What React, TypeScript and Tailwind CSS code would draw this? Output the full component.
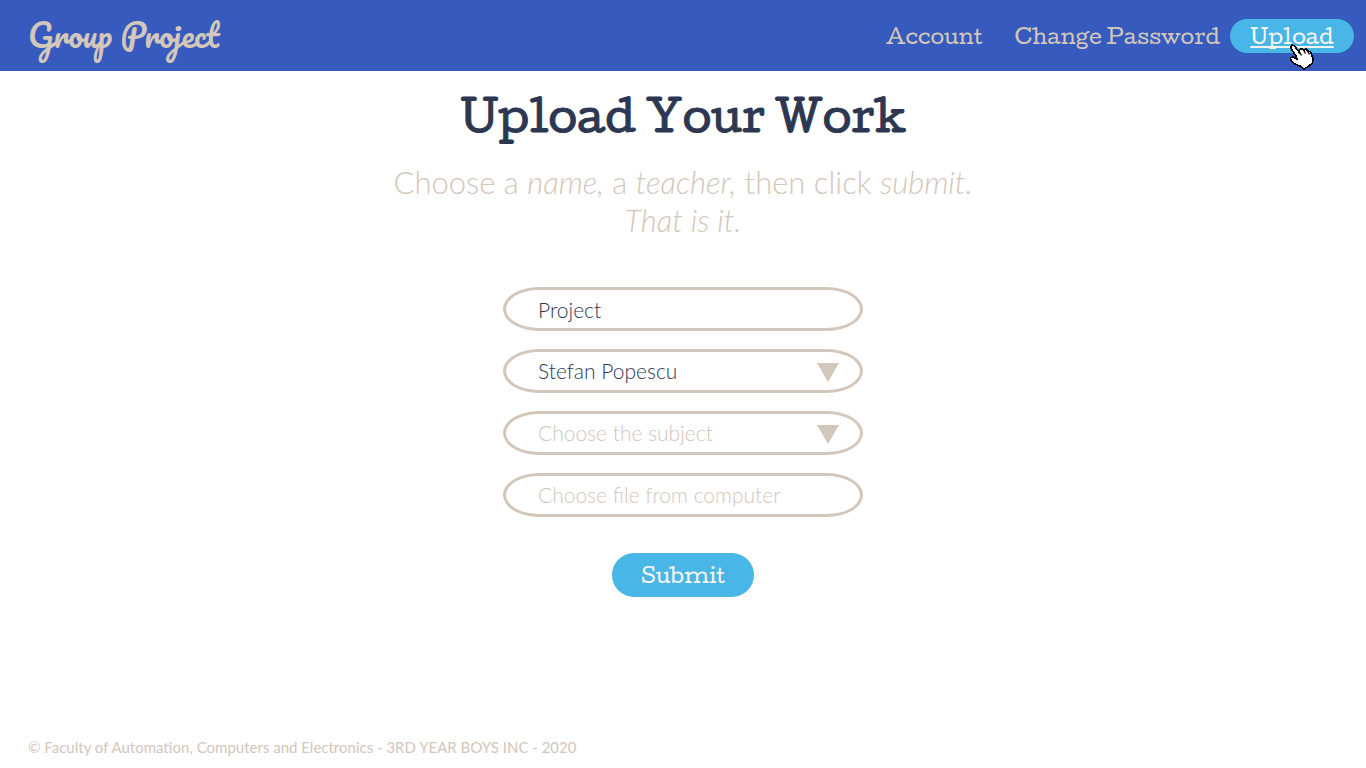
import { useState } from "react";

const slab = "font-['Cutive','Podkova','DejaVu_Serif',serif] font-normal";
const fieldBox =
  "h-[44px] w-full rounded-[36px/22px] border-[3px] border-[#d3c6ba] bg-white pl-8 text-[21px] leading-[28px] font-light outline-none";

function HandCursor() {
  return (
    <svg
      viewBox="0 0 26 26"
      className="pointer-events-none absolute top-[25px] left-[59px] h-[26px] w-[26px]"
      aria-hidden="true"
    >
      <path
        d="M1.500 3L3 1L5.500 2L10 8L10.500 5.500L13 4.500L15 6L17 5L19 7L21.500 8L24 14L23.500 19L20 22L15 25L12 22.500L6 20L2 16.500L1.500 14L4 13L8 15L7 12L3 6Z"
        fill="#ffffff"
        stroke="#000000"
        strokeWidth="1.600"
        shapeRendering="crispEdges"
      />
      <path d="M10.500 8L12.500 11.500M14.500 6L16.500 9.500M18.500 7L20.500 10.500" stroke="#000000" strokeWidth="1.300" fill="none" />
    </svg>
  );
}

function Triangle() {
  return (
    <svg
      viewBox="0 0 22 19"
      className="pointer-events-none absolute top-[14px] right-6 h-[19px] w-[22px]"
      aria-hidden="true"
    >
      <path d="M0 0H22L11 19Z" fill="#d3c6ba" />
    </svg>
  );
}

function SelectField({ id, label, options, initial }: { id: string; label: string; options: string[]; initial: string }) {
  const [value, setValue] = useState(initial);
  return (
    <div className="relative">
      <label htmlFor={id} className="sr-only">{label}</label>
      <select
        id={id}
        value={value}
        onChange={(e) => setValue(e.target.value)}
        className={`${fieldBox} block appearance-none pr-14 ${value ? "text-[#2d3751]" : "text-[#d3c6ba]"}`}
      >
        <option value="">{label}</option>
        {options.map((o) => (
          <option key={o} value={o}>{o}</option>
        ))}
      </select>
      <Triangle />
    </div>
  );
}

export default function App() {
  const [fileName, setFileName] = useState("");
  return (
    <div className="flex min-h-screen flex-col bg-white font-['Lato',sans-serif] text-[#d3c6ba]">
      <header className="flex h-[71px] items-center justify-between bg-[#365abd] pr-3 pl-7">
        <a href="#home" className="pb-1 font-['Pacifico','Lato',cursive] text-[32px] leading-[56px]">Group Project</a>
        <nav className={`flex items-center text-[20px] leading-[34px] ${slab}`}>
          <a href="#account">Account</a>
          <a href="#password" className="ml-8">Change Password</a>
          <a
            href="#upload"
            className="relative ml-2.5 flex h-[34px] w-[124px] items-center justify-center rounded-full bg-[#48b6e7] text-[#f7f5f2] underline decoration-2 underline-offset-2 [text-decoration-skip-ink:none]"
          >
            Upload
            <HandCursor />
          </a>
        </nav>
      </header>

      <main className="flex flex-1 flex-col items-center">
        <h1 className={`mt-4 text-[42px] leading-[56px] text-[#2d3751] [-webkit-text-stroke:1px_#2d3751] ${slab}`}>
          Upload Your Work
        </h1>
        <p className="mt-5 text-center text-[31px] leading-[38px] font-light">
          Choose a <em>name,</em> a <em>teacher,</em> then click <em>submit.</em>
          <br />
          <em>That is it.</em>
        </p>
        <form className="mt-12 flex w-[360px] flex-col items-center" onSubmit={(e) => e.preventDefault()}>
          <div className="flex w-full flex-col gap-[18px]">
            <div>
              <label htmlFor="name" className="sr-only">Project name</label>
              <input id="name" type="text" defaultValue="Project" className={`${fieldBox} block pr-8 text-[#2d3751]`} />
            </div>
            <SelectField id="teacher" label="Choose the teacher" options={["Stefan Popescu"]} initial="Stefan Popescu" />
            <SelectField id="subject" label="Choose the subject" options={["Software Engineering", "Databases"]} initial="" />
            <label htmlFor="file" className={`${fieldBox} relative flex cursor-pointer items-center`}>
              {fileName || "Choose file from computer"}
              <input
                id="file"
                type="file"
                className="sr-only"
                onChange={(e) => setFileName(e.target.files?.[0]?.name ?? "")}
              />
            </label>
          </div>
          <button type="submit" className={`mt-9 h-[44px] w-[142px] rounded-full bg-[#48b6e7] text-[20px] leading-[34px] text-[#f7f5f2] ${slab}`}>
            Submit
          </button>
        </form>
      </main>

      <footer className="px-7 pb-[11px] text-[15px] leading-[20px]">
        © Faculty of Automation, Computers and Electronics - 3RD YEAR BOYS INC - 2020
      </footer>
    </div>
  );
}
